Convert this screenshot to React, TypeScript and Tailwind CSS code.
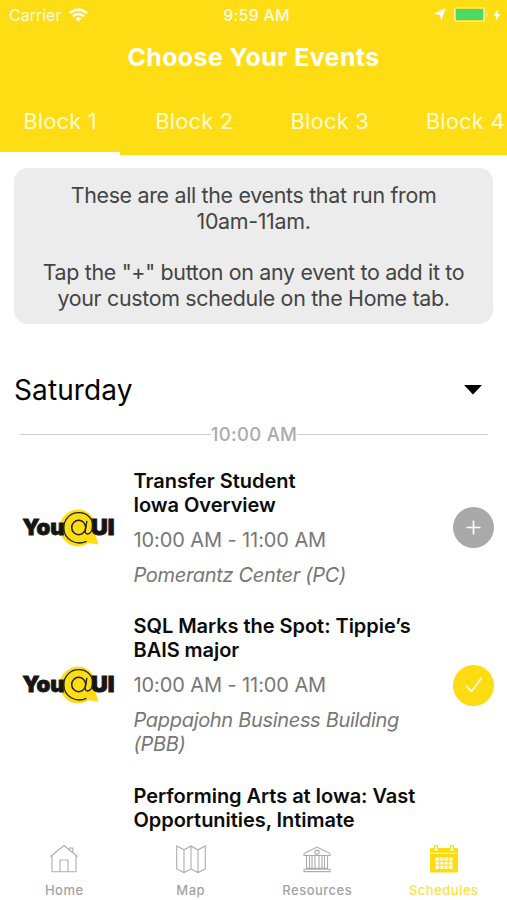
import React from 'react';

interface EventItem {
    title: string[];
    time?: string;
    place?: string[];
    added?: boolean;
}

const BLOCKS = ['Block 1', 'Block 2', 'Block 3', 'Block 4'];

const EVENTS: EventItem[] = [
    {
        title: ['Transfer Student', 'Iowa Overview'],
        time: '10:00 AM - 11:00 AM',
        place: ['Pomerantz Center (PC)'],
        added: false,
    },
    {
        title: ['SQL Marks the Spot: Tippie’s', 'BAIS major'],
        time: '10:00 AM - 11:00 AM',
        place: ['Pappajohn Business Building', '(PBB)'],
        added: true,
    },
    {
        title: ['Performing Arts at Iowa: Vast', 'Opportunities, Intimate'],
    },
];

const StatusBar: React.FC = () => (
    <div className="grid h-[29px] grid-cols-3 items-center pl-[9px] pr-[6px] text-[16px] leading-none text-[#fffbe0]">
        <div className="flex items-center gap-[8px]">
            <span>Carrier</span>
            <svg width="19" height="14" viewBox="0 0 19 14" fill="none" stroke="#fff" strokeWidth="2.5">
                <path d="M1 5.1a12.2 12.2 0 0 1 17 0" />
                <path d="M4 8.3a8 8 0 0 1 11 0" />
                <path d="M9.5 13.6 6.5 10.6a4.3 4.3 0 0 1 6 0z" fill="#fff" stroke="none" />
            </svg>
        </div>
        <span className="justify-self-center pl-[3px] font-medium tracking-[0.2px] whitespace-nowrap">9:59 AM</span>
        <div className="flex items-center justify-end">
            <svg width="13" height="13" viewBox="0 0 13 13" fill="#fff">
                <path d="M12.8.2 8.2 12.8 6.9 7 .2 5.8z" />
            </svg>
            <svg className="ml-[8px]" width="36" height="15" viewBox="0 0 36 15">
                <rect x="0.6" y="0.8" width="29.6" height="13.4" rx="2" fill="none" stroke="#fff3a0" strokeWidth="1.1" />
                <rect x="2" y="2" width="27" height="11" fill="#4cd964" />
                <path d="M32 5.5c2 .6 2 3.4 0 4z" fill="#fff3a0" />
            </svg>
            <svg className="ml-[3px]" width="8" height="12" viewBox="0 0 8 12" fill="#fff">
                <path d="M5 0 .5 6.7h2.9L2.5 12 7.5 5H4.5z" />
            </svg>
        </div>
    </div>
);

const Logo: React.FC = () => (
    <svg width="94" height="40" viewBox="0 0 94 40" className="font-['Inter',sans-serif]">
        <circle cx="56" cy="20" r="18.4" fill="#ffdd15" />
        <path d="M72 22 76.5 36.5 58 34z" fill="#ffdd15" />
        <text x="0.5" y="27" fontSize="21.4" fontWeight="900" fill="#151515" stroke="#151515" strokeWidth="0.8" textLength="42" lengthAdjust="spacingAndGlyphs">You</text>
        <text x="69" y="27" fontSize="21.4" fontWeight="900" fill="#151515" stroke="#151515" strokeWidth="0.8" textLength="23.5" lengthAdjust="spacingAndGlyphs">UI</text>
        <path d="M64.5 33.4C54 38 42 31.5 41.8 20 41.8 11 48.5 4.5 57 4.7c8.5.2 14 6 13.8 13.3-.2 4.8-2.6 8.3-5.4 8-2.3-.3-2.4-2.4-2-4.6l1.5-8.6" fill="none" stroke="#222" strokeWidth="1.3" />
        <ellipse cx="56.7" cy="19.5" rx="7" ry="7.2" fill="none" stroke="#222" strokeWidth="1.5" />
    </svg>
);

const AddButton: React.FC<{ added?: boolean }> = ({ added }) => (
    <button
        className={
            added
                ? 'flex size-[41px] items-center justify-center rounded-full bg-[#ffdb12]'
                : 'flex size-[41px] items-center justify-center rounded-full bg-[#a9a9a9]'
        }
    >
        {added ? (
            <svg width="18" height="18" viewBox="0 0 18 18" fill="none" stroke="#fff" strokeWidth="1.5">
                <path d="m1.2 10 5.4 5.3L16.7 1.8" />
            </svg>
        ) : (
            <svg width="15" height="15" viewBox="0 0 15 15" fill="none" stroke="#fff" strokeWidth="1.7">
                <path d="M7.5.5v14M.5 7.5h14" />
            </svg>
        )}
    </button>
);

const EventRow: React.FC<{ event: EventItem }> = ({ event }) => (
    <div className="flex items-center pl-[22px] pr-[13px]">
        <div className="w-[111.5px] shrink-0">{event.time && <Logo />}</div>
        <div className="flex-1 whitespace-nowrap text-[20px] leading-[24px]">
            <h3 className="font-semibold tracking-[-0.04px] text-[#0c0c0c]">
                {event.title.map((line) => (
                    <span key={line} className="block">{line}</span>
                ))}
            </h3>
            {event.time && <p className="mt-[11px] tracking-[-0.1px] text-[#777]">{event.time}</p>}
            {event.place && (
                <p className="mt-[11px] italic tracking-[-0.32px] text-[#777]">
                    {event.place.map((line) => (
                        <span key={line} className="block">{line}</span>
                    ))}
                </p>
            )}
        </div>
        {event.time && <AddButton added={event.added} />}
    </div>
);

const HomeIcon: React.FC = () => (
    <svg width="30" height="30" viewBox="0 0 30 30" fill="none" stroke="#adadad" strokeWidth="1.1">
        <path d="M1.5 12.5 15 1.5l13.5 11M3 11.5v16.3h24V11.5M11 27.8V16h8v11.8M20.5 5.5V4h3.3v4.5" />
    </svg>
);

const MapIcon: React.FC = () => (
    <svg width="30" height="30" viewBox="0 0 30 30" fill="none" stroke="#adadad" strokeWidth="1.1">
        <path d="M.7 2 8 5.8 15 2l7 3.8L29.3 2v23L22 28.6 15 25l-7 3.6L.7 25zM8 5.8v22.8M15 2v23M22 5.8v22.8" />
    </svg>
);

const ResourcesIcon: React.FC = () => (
    <svg width="30" height="30" viewBox="0 0 30 30" fill="none" stroke="#adadad" strokeWidth="1.1">
        <path d="M2 9.5 15 3l13 6.5v2H2zM4 24.2h22M2 27.6h26v-2.4H2z" />
        <circle cx="15" cy="8.2" r="2.1" />
        <path d="M4.5 12v12M7.5 12v12M10 12v12M13 12v12M17 12v12M20 12v12M22.5 12v12M25.5 12v12" />
    </svg>
);

const SchedulesIcon: React.FC = () => (
    <svg width="30" height="30" viewBox="0 0 30 30">
        <path d="M1 4h4v2.5h4V4h12v2.5h4V4h4v24.5H1z" fill="#ffdb12" />
        <path d="M5.5 5V2.5a1.6 1.6 0 0 1 3 0V5M21.5 5V2.5a1.6 1.6 0 0 1 3 0V5" fill="none" stroke="#ffdb12" strokeWidth="1.3" />
        <path d="M1 9.3h28" stroke="#fff8cf" strokeWidth="1" />
        <path d="M6.5 13.5h17V25h-17z" fill="#fffbe3" />
        <path d="M6.5 17.3h17M6.5 21.1h17M10.8 13.5V25M15 13.5V25M19.2 13.5V25" stroke="#ffdb12" strokeWidth="1" />
    </svg>
);

const TABS = [
    { label: 'Home', icon: <HomeIcon /> },
    { label: 'Map', icon: <MapIcon /> },
    { label: 'Resources', icon: <ResourcesIcon /> },
    { label: 'Schedules', icon: <SchedulesIcon />, active: true },
];

export default function App() {
    return (
        <div className="flex h-[900px] w-[507px] flex-col overflow-hidden bg-white font-['Inter',sans-serif]">
            <header className="h-[155px] shrink-0 overflow-hidden bg-[#ffdd15]">
                <StatusBar />
                <h1 className="mt-[14px] text-center text-[24.8px] font-bold leading-[29px] tracking-[0.5px] text-white">
                    Choose Your Events
                </h1>
                <nav className="mt-[15px] flex">
                    {BLOCKS.map((block, i) => (
                        <div
                            key={block}
                            className={
                                i === 0
                                    ? 'mr-[7px] h-[68px] w-[120px] shrink-0 border-b-[3px] border-white pt-[21px] text-center text-[22px] leading-[27px] tracking-[0.15px] text-[#fffad0]'
                                    : 'mr-[1px] h-[68px] w-[134.5px] shrink-0 pt-[21px] text-center text-[22px] leading-[27px] tracking-[0.15px] text-[#fffad0]'
                            }
                        >
                            {block}
                        </div>
                    ))}
                </nav>
            </header>

            <main className="flex-1 overflow-hidden">
                <div className="mx-[14px] mt-[13px] h-[156px] whitespace-nowrap rounded-[14px] bg-[#ececec] pt-[15px] text-center text-[21.4px] leading-[25.7px] tracking-[-0.31px] text-[#444]">
                    <p>These are all the events that run from<br />10am-11am.</p>
                    <p className="mt-[25.7px]">Tap the "+" button on any event to add it to<br />your custom schedule on the Home tab.</p>
                </div>

                <div className="mt-[49px] flex items-center justify-between pl-[14px] pr-[25px]">
                    <h2 className="text-[28px] leading-[34px] tracking-[0.1px] text-black">Saturday</h2>
                    <svg width="18" height="10" viewBox="0 0 18 10" fill="#000">
                        <path d="M0 0h18L9 9.5z" />
                    </svg>
                </div>

                <div className="ml-[20px] mr-[19px] mt-[15px] flex items-center">
                    <div className="h-px flex-1 bg-[#cfcfcf]" />
                    <span className="text-[18.5px] font-medium leading-[24px] tracking-[0.3px] text-[#ababab]">10:00 AM</span>
                    <div className="h-px flex-1 bg-[#cfcfcf]" />
                </div>

                <div className="mt-[22.5px] flex flex-col gap-[27.7px]">
                    {EVENTS.map((event) => (
                        <EventRow key={event.title[0]} event={event} />
                    ))}
                </div>
            </main>

            <footer className="grid h-[68px] shrink-0 grid-cols-4 bg-white pl-px">
                {TABS.map((tab) => (
                    <div key={tab.label} className="flex flex-col items-center pt-[12px]">
                        {tab.icon}
                        <span
                            className={
                                tab.active
                                    ? 'mt-[8px] text-[13px] font-medium leading-[16px] tracking-[0.5px] text-[#ffe04a]'
                                    : 'mt-[8px] text-[13px] font-medium leading-[16px] tracking-[0.5px] text-[#a3a3a3]'
                            }
                        >
                            {tab.label}
                        </span>
                    </div>
                ))}
            </footer>
        </div>
    );
}
